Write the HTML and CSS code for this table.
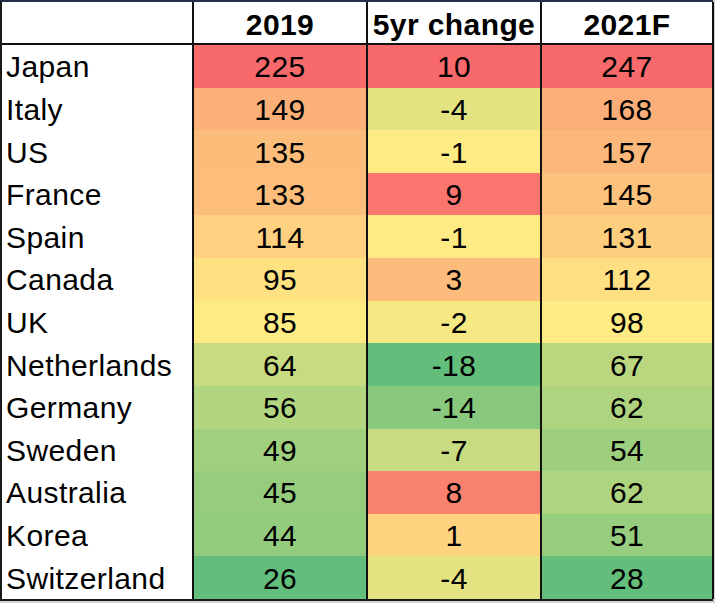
FILE: index.html
```html
<!DOCTYPE html>
<html>
<head>
<meta charset="utf-8">
<link rel="stylesheet" href="styles.css">
</head>
<body>
<div class="sheet">
  <div class="grid">
    <div class="cell head"></div>
    <div class="cell head num">2019</div>
    <div class="cell head num">5yr change</div>
    <div class="cell head num">2021F</div>

    <div class="cell name">Japan</div>
    <div class="cell num" style="background:#f8696b">225</div>
    <div class="cell num" style="background:#f8696b">10</div>
    <div class="cell num" style="background:#f8696b">247</div>

    <div class="cell name">Italy</div>
    <div class="cell num" style="background:#fcb079">149</div>
    <div class="cell num" style="background:#e3e382">-4</div>
    <div class="cell num" style="background:#fcae78">168</div>

    <div class="cell name">US</div>
    <div class="cell num" style="background:#fcbd7b">135</div>
    <div class="cell num" style="background:#ffeb84">-1</div>
    <div class="cell num" style="background:#fcb77a">157</div>

    <div class="cell name">France</div>
    <div class="cell num" style="background:#fdbe7b">133</div>
    <div class="cell num" style="background:#f9756d">9</div>
    <div class="cell num" style="background:#fdc27c">145</div>

    <div class="cell name">Spain</div>
    <div class="cell num" style="background:#fed07f">114</div>
    <div class="cell num" style="background:#ffeb84">-1</div>
    <div class="cell num" style="background:#fdce7e">131</div>

    <div class="cell name">Canada</div>
    <div class="cell num" style="background:#fee282">95</div>
    <div class="cell num" style="background:#fcbc7b">3</div>
    <div class="cell num" style="background:#fedf82">112</div>

    <div class="cell name">UK</div>
    <div class="cell num" style="background:#ffeb84">85</div>
    <div class="cell num" style="background:#f6e883">-2</div>
    <div class="cell num" style="background:#ffeb84">98</div>

    <div class="cell name">Netherlands</div>
    <div class="cell num" style="background:#c7db81">64</div>
    <div class="cell num" style="background:#63be7b">-18</div>
    <div class="cell num" style="background:#bad780">67</div>

    <div class="cell name">Germany</div>
    <div class="cell num" style="background:#b2d580">56</div>
    <div class="cell num" style="background:#88c97d">-14</div>
    <div class="cell num" style="background:#afd47f">62</div>

    <div class="cell name">Sweden</div>
    <div class="cell num" style="background:#a0cf7e">49</div>
    <div class="cell num" style="background:#c8db81">-7</div>
    <div class="cell num" style="background:#9dcf7e">54</div>

    <div class="cell name">Australia</div>
    <div class="cell num" style="background:#95cc7e">45</div>
    <div class="cell num" style="background:#f9816f">8</div>
    <div class="cell num" style="background:#afd47f">62</div>

    <div class="cell name">Korea</div>
    <div class="cell num" style="background:#93cc7e">44</div>
    <div class="cell num" style="background:#fed37f">1</div>
    <div class="cell num" style="background:#96cd7e">51</div>

    <div class="cell name">Switzerland</div>
    <div class="cell num" style="background:#63be7b">26</div>
    <div class="cell num" style="background:#e3e382">-4</div>
    <div class="cell num" style="background:#63be7b">28</div>
  </div>
</div>
</body>
</html>
```

FILE: styles.css
```css
html, body {
  margin: 0;
  padding: 0;
  background: #ffffff;
}

.sheet {
  width: 715px;
  height: 603px;
  background: #d4d4d4;
  overflow: hidden;
}

.grid {
  display: grid;
  grid-template-columns: 192px 174px 174px 172px;
  grid-template-rows: 43px repeat(13, 1fr);
  width: 713px;
  height: 601px;
  box-sizing: border-box;
  border-top: 2px solid #26304a;
  border-left: 2px solid #1a1a1a;
  border-bottom: 2px solid #1a1a1a;
  background: #ffffff;
  font-family: "Liberation Sans", Arial, sans-serif;
  font-size: 30px;
  letter-spacing: 0.4px;
  color: #000000;
}

.cell {
  display: flex;
  align-items: center;
  box-sizing: border-box;
  padding-top: 2px;
  border-right: 2px solid #111111;
  line-height: 1;
  white-space: nowrap;
  overflow: hidden;
}

.head {
  padding-top: 4px;
  border-bottom: 2px solid #111111;
  font-weight: bold;
  background: #ffffff;
}

.name {
  padding-left: 4px;
  background: #ffffff;
}

.num {
  justify-content: center;
}
```
